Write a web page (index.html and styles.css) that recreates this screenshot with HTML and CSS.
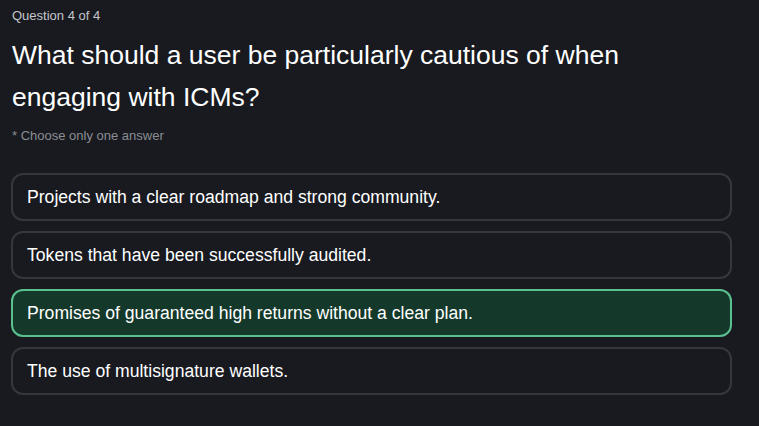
FILE: index.html
```html
<!DOCTYPE html>
<html>
<head>
<meta charset="utf-8">
<link rel="stylesheet" href="styles.css">
</head>
<body>
<main class="quiz">
  <div class="counter">Question 4 of 4</div>
  <h1 class="question">What should a user be particularly cautious of when engaging with ICMs?</h1>
  <div class="hint">* Choose only one answer</div>
  <div class="options">
    <div class="option">Projects with a clear roadmap and strong community.</div>
    <div class="option">Tokens that have been successfully audited.</div>
    <div class="option selected">Promises of guaranteed high returns without a clear plan.</div>
    <div class="option">The use of multisignature wallets.</div>
  </div>
</main>
</body>
</html>
```
FILE: styles.css
```css
html, body {
  margin: 0;
  background: #181a20;
  height: 100%;
}
body {
  font-family: "Liberation Sans", Arial, sans-serif;
  color: #ffffff;
}
.quiz {
  padding: 8px 28px 0 12px;
  width: 720px;
}
.counter {
  font-size: 13px;
  line-height: 16px;
  color: #c4c6cc;
}
.question {
  margin: 10px 0 0 0;
  font-size: 26.5px;
  font-weight: 400;
  line-height: 42px;
  max-width: 680px;
}
.hint {
  margin-top: 10px;
  font-size: 13px;
  line-height: 16px;
  color: #8b8d93;
}
.options {
  margin-top: 29px;
  margin-left: -1px;
  display: flex;
  flex-direction: column;
  gap: 10px;
}
.option {
  height: 44px;
  box-sizing: content-box;
  border: 2px solid #36373c;
  border-radius: 12px;
  padding: 0 14px;
  display: flex;
  align-items: center;
  font-size: 17.6px;
}
.option.selected {
  background: #14392b;
  border-color: #5bc08f;
}
```
